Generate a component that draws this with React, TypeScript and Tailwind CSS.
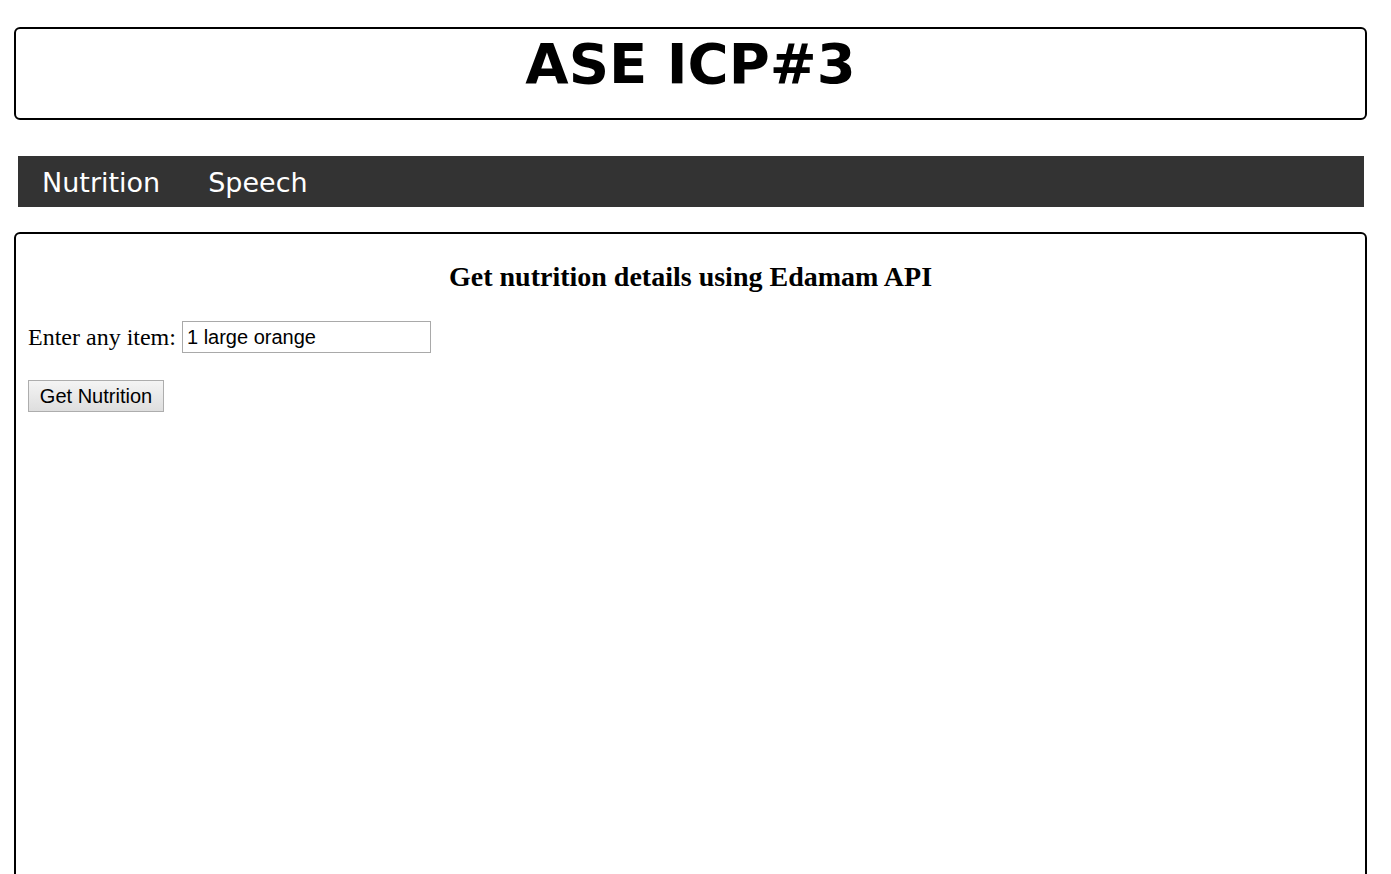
import React from "react";

export default function App() {
  return (
    <div className="w-[1391px] min-h-[874px] bg-white overflow-hidden">
      <div className="flex flex-col pt-[27px] pl-[14px]">
        <div className="w-[1353px] h-[93px] border-2 border-black rounded-[6px] flex justify-center">
          <h1 className="font-['DejaVu_Sans',Verdana,sans-serif] font-bold text-[56px] leading-none mt-[7px] text-black">
            ASE ICP#3
          </h1>
        </div>
        <nav className="ml-[4px] mt-[36px] w-[1346px] h-[51px] bg-[#333333] flex items-center font-['DejaVu_Sans',Verdana,sans-serif] text-[27px] text-white">
          <span className="px-[24px] leading-none mt-[1px]">Nutrition</span>
          <span className="px-[24px] leading-none mt-[1px]">Speech</span>
        </nav>
        <div className="mt-[25px] w-[1353px] h-[700px] border-2 border-black rounded-[6px] px-[12px] font-['Liberation_Serif','Times_New_Roman',serif] text-black">
          <h3 className="text-center font-bold text-[28px] leading-none mt-[29px]">
            Get nutrition details using Edamam API
          </h3>
          <div className="mt-[30px] flex items-center text-[24px] leading-none">
            <span>Enter any item:</span>
            <input
              className="ml-[6px] w-[249px] h-[32px] border border-[#a9a9a9] px-[4px] font-['Liberation_Sans',Arial,sans-serif] text-[20px] text-black outline-none"
              defaultValue="1 large orange"
            />
          </div>
          <button className="mt-[27px] w-[136px] h-[32px] border border-[#adadad] bg-gradient-to-b from-[#f4f4f4] to-[#dedede] font-['Liberation_Sans',Arial,sans-serif] text-[20px] text-black leading-none">
            Get Nutrition
          </button>
        </div>
      </div>
    </div>
  );
}
